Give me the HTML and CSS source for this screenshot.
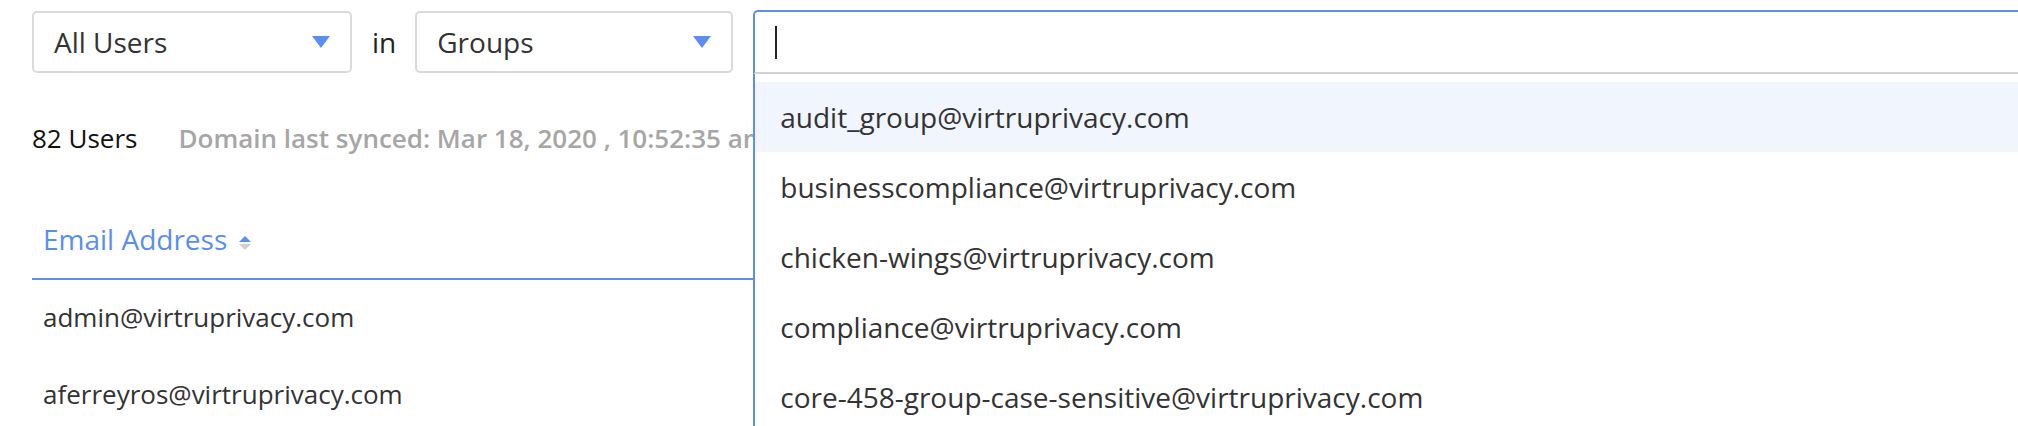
FILE: index.html
```html
<!DOCTYPE html>
<html lang="en">
<head>
    <meta charset="UTF-8">
    <title>Users</title>
    <link rel="stylesheet" href="styles.css">
</head>
<body>
    <div class="toolbar">
        <div class="select">
            <span>All Users</span>
            <span class="caret"></span>
        </div>
        <span class="in">in</span>
        <div class="select">
            <span>Groups</span>
            <span class="caret"></span>
        </div>
        <div class="search">
            <div class="search-input"><span class="cursor"></span></div>
            <ul class="options">
                <li class="active">audit_group@virtruprivacy.com</li>
                <li>businesscompliance@virtruprivacy.com</li>
                <li>chicken-wings@virtruprivacy.com</li>
                <li>compliance@virtruprivacy.com</li>
                <li>core-458-group-case-sensitive@virtruprivacy.com</li>
            </ul>
        </div>
    </div>

    <div class="summary">
        <span class="count">82 Users</span>
        <span class="synced">Domain last synced: Mar 18, 2020 , 10:52:35 am</span>
    </div>

    <table class="users">
        <thead>
            <tr>
                <th>Email Address <span class="sort"><i class="up"></i><i class="down"></i></span></th>
            </tr>
        </thead>
        <tbody>
            <tr><td>admin@virtruprivacy.com</td></tr>
            <tr><td>aferreyros@virtruprivacy.com</td></tr>
        </tbody>
    </table>
</body>
</html>
```

FILE: styles.css
```css
body {
    margin: 0;
    padding: 11px 0 0 32px;
    font-family: "Open Sans", sans-serif;
    color: #333;
    background: #fff;
    overflow: hidden;
    height: 426px;
    box-sizing: border-box;
}
.toolbar {
    display: flex;
    align-items: flex-start;
    gap: 20px;
    position: relative;
    z-index: 2;
}
.select {
    width: 320px;
    height: 62px;
    box-sizing: border-box;
    border: 2px solid #dadada;
    border-radius: 5px;
    padding: 0 20px;
    display: flex;
    align-items: center;
    justify-content: space-between;
    font-size: 28px;
    line-height: 40px;
    flex: none;
}
.select + .in + .select {
    width: 318px;
}
.caret {
    width: 0;
    height: 0;
    border-left: 9px solid transparent;
    border-right: 9px solid transparent;
    border-top: 12px solid #5a8ef2;
}
.in {
    font-size: 28px;
    line-height: 62px;
    color: #222;
    margin-right: -1px;
}
.search {
    position: relative;
    width: 1400px;
    flex: none;
    margin-top: -1px;
}
.search-input {
    height: 64px;
    box-sizing: border-box;
    border: 2px solid #5a8ef2;
    border-bottom: 2px solid #d2d2d2;
    border-radius: 5px 5px 0 0;
    padding: 14px 20px 0;
}
.cursor {
    display: block;
    width: 2px;
    height: 33px;
    background: #222;
}
.options {
    position: absolute;
    top: 100%;
    left: 0;
    right: 0;
    list-style: none;
    margin: 0;
    padding: 8px 0 0;
    background: #fff;
    border-left: 2px solid #5a8ef2;
    border-right: 2px solid #5a8ef2;
    height: 360px;
}
.options li {
    height: 70px;
    padding: 0 25px;
    font-size: 28px;
    line-height: 70px;
    color: #333;
}
.options li.active {
    background: #f0f5fe;
}
.summary {
    margin-top: 46px;
    display: flex;
    gap: 41px;
    font-size: 26px;
    line-height: 36px;
}
.count {
    color: #111;
}
.synced {
    color: #a6a6a6;
    font-weight: 600;
    white-space: nowrap;
}
.users {
    margin-top: 63px;
    border-collapse: collapse;
    width: 1400px;
}
.users th {
    text-align: left;
    font-weight: 400;
    font-size: 28px;
    line-height: 40px;
    color: #5a8ef2;
    padding: 0 11px 19px;
    border-bottom: 2px solid #5a8ef2;
}
.sort {
    display: inline-flex;
    flex-direction: column;
    gap: 2px;
    vertical-align: middle;
    margin-left: 4px;
}
.sort i {
    width: 0;
    height: 0;
    border-left: 6px solid transparent;
    border-right: 6px solid transparent;
}
.sort .up {
    border-bottom: 6px solid #5a8ef2;
}
.sort .down {
    border-top: 6px solid #cfcfcf;
}
.users td {
    font-size: 26px;
    line-height: 40px;
    padding: 17px 11px 20px;
    color: #333;
}
```
